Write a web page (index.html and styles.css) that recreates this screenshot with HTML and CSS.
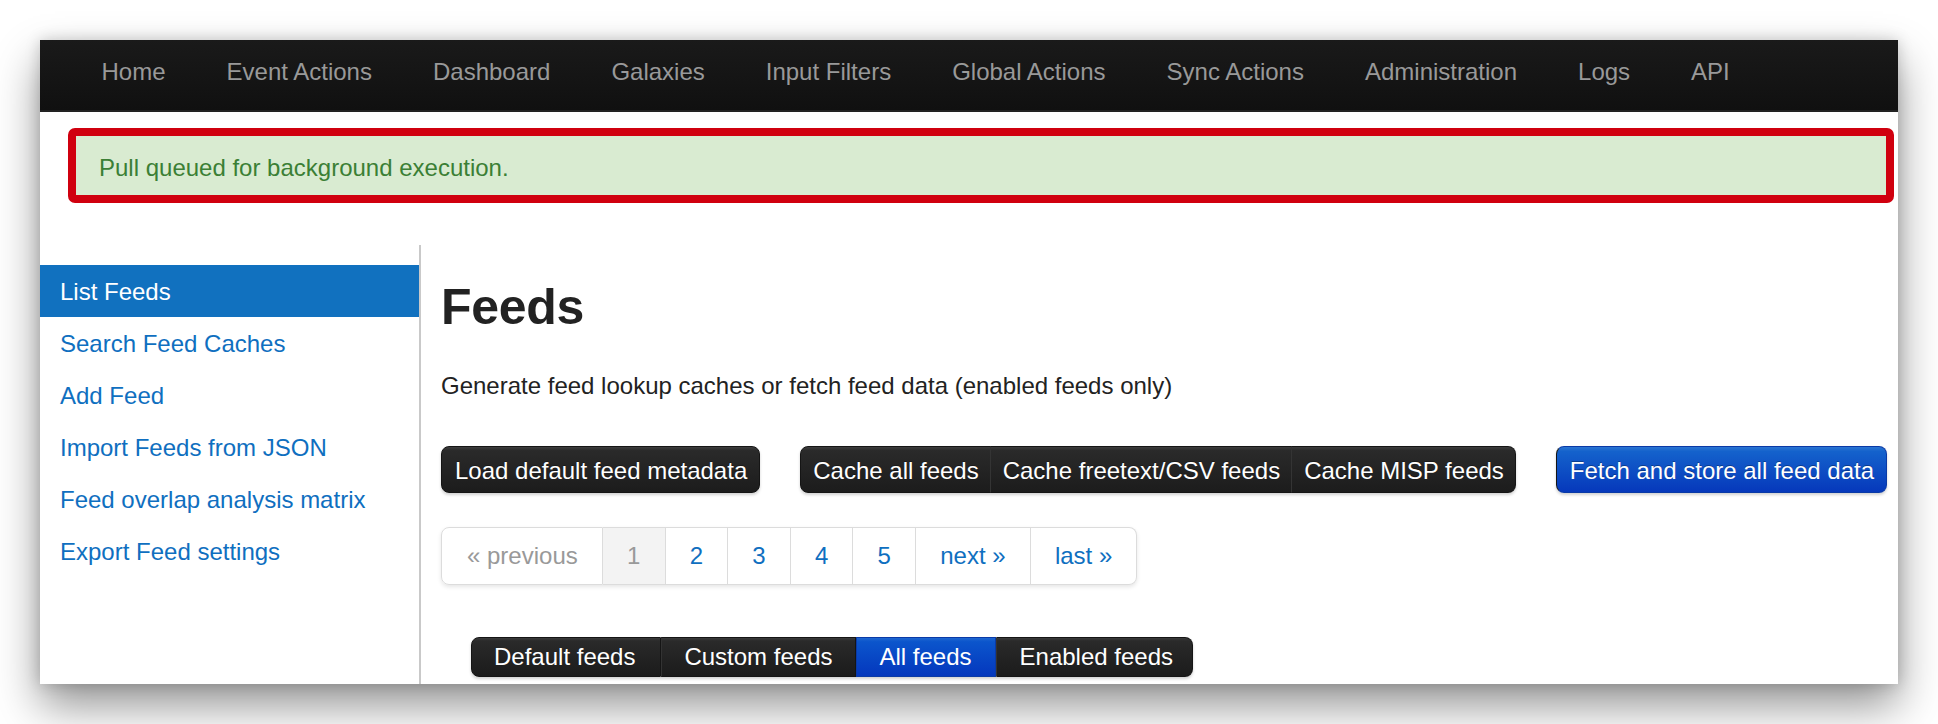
FILE: index.html
```html
<!DOCTYPE html>
<html>
<head>
<meta charset="utf-8">
<title>Feeds</title>
<link rel="stylesheet" href="styles.css">
</head>
<body>
<div class="window">
  <nav class="navbar">
    <ul class="nav">
      <li><a>Home</a></li>
      <li><a>Event Actions</a></li>
      <li><a>Dashboard</a></li>
      <li><a>Galaxies</a></li>
      <li><a>Input Filters</a></li>
      <li><a>Global Actions</a></li>
      <li><a>Sync Actions</a></li>
      <li><a>Administration</a></li>
      <li><a>Logs</a></li>
      <li><a>API</a></li>
    </ul>
  </nav>
  <div class="alert">Pull queued for background execution.</div>
  <div class="layout">
    <aside class="sidebar">
      <ul class="side-nav">
        <li class="active"><a>List Feeds</a></li>
        <li><a>Search Feed Caches</a></li>
        <li><a>Add Feed</a></li>
        <li><a>Import Feeds from JSON</a></li>
        <li><a>Feed overlap analysis matrix</a></li>
        <li><a>Export Feed settings</a></li>
      </ul>
    </aside>
    <main class="main">
      <h2 class="title">Feeds</h2>
      <p class="lead">Generate feed lookup caches or fetch feed data (enabled feeds only)</p>
      <div class="toolbar">
        <div class="btn-group">
          <a class="btn">Load default feed metadata</a>
        </div>
        <div class="btn-group">
          <a class="btn">Cache all feeds</a>
          <a class="btn">Cache freetext/CSV feeds</a>
          <a class="btn">Cache MISP feeds</a>
        </div>
        <div class="btn-group">
          <a class="btn btn-primary">Fetch and store all feed data</a>
        </div>
      </div>
      <ul class="pagination">
        <li class="disabled"><span>« previous</span></li>
        <li class="current"><span>1</span></li>
        <li><a>2</a></li>
        <li><a>3</a></li>
        <li><a>4</a></li>
        <li><a>5</a></li>
        <li><a>next »</a></li>
        <li><a>last »</a></li>
      </ul>
      <div class="filter-group">
        <a class="fbtn f-default">Default feeds</a>
        <a class="fbtn f-custom">Custom feeds</a>
        <a class="fbtn f-all active">All feeds</a>
        <a class="fbtn f-enabled">Enabled feeds</a>
      </div>
    </main>
  </div>
</div>
</body>
</html>
```
FILE: styles.css
```css
* { box-sizing: border-box; }
html, body { margin: 0; padding: 0; }
body {
  background: #ffffff;
  font-family: "Liberation Sans", Arial, Helvetica, sans-serif;
  font-size: 24px;
  color: #222;
  padding: 40px;
  width: 1938px;
  height: 724px;
  overflow: hidden;
}
.window {
  width: 1858px;
  height: 644px;
  background: #fff;
  overflow: hidden;
  box-shadow: 0 22px 42px rgba(0,0,0,0.42), 0 0 14px rgba(0,0,0,0.18);
}
.navbar {
  height: 72px;
  background: linear-gradient(#1a1a1a, #101010);
  border-bottom: 2px solid #222;
  padding-left: 31px;
}
.nav {
  list-style: none;
  margin: 0;
  padding: 0;
  display: flex;
}
.nav a {
  display: block;
  padding: 0 30.5px 6px;
  line-height: 64px;
  color: #999;
  font-size: 24px;
}
.alert {
  margin: 16px 4px 0 28px;
  height: 75px;
  border: 8px solid #d0000f;
  border-radius: 7px;
  background: #d9ebd1;
  color: #3b7f35;
  padding: 6px 23px 0;
  line-height: 51px;
  font-size: 24px;
}
.layout {
  display: flex;
  margin-top: 42px;
}
.sidebar {
  width: 381px;
  flex: none;
  border-right: 2px solid #c9c9c9;
  padding-top: 20px;
  min-height: 460px;
}
.side-nav {
  list-style: none;
  margin: 0;
  padding: 0;
}
.side-nav a {
  display: block;
  height: 52px;
  line-height: 52px;
  padding: 1px 0 0 20px;
  color: #0f6fc0;
  font-size: 24px;
}
.side-nav .active a {
  background: #1171bf;
  color: #fff;
}
.main {
  flex: 1;
  padding-left: 20px;
}
.title {
  margin: 32px 0 0;
  font-size: 50px;
  line-height: 60px;
  font-weight: bold;
  color: #222;
  letter-spacing: -0.3px;
}
.lead {
  margin: 31px 0 0;
  line-height: 36px;
  font-size: 24px;
  color: #222;
}
.toolbar {
  display: flex;
  gap: 40px;
  margin-top: 42px;
}
.btn-group {
  display: flex;
  border-radius: 8px;
  box-shadow: 0 2px 3px rgba(0,0,0,0.18);
}
.btn {
  display: block;
  height: 47px;
  padding: 2px 11px 0 12px;
  line-height: 43px;
  color: #fff;
  font-size: 24px;
  white-space: nowrap;
  background: linear-gradient(#3d3d3d 0, #2a2a2a 8%, #1c1c1c 100%);
  border: 1px solid #151515;
  border-left-color: #343434;
  text-shadow: 0 -1px 0 rgba(0,0,0,0.3);
}
.btn:first-child {
  border-radius: 8px 0 0 8px;
  border-left-color: #151515;
}
.btn:last-child { border-radius: 0 8px 8px 0; }
.btn:only-child { border-radius: 8px; padding: 2px 12px 0 13px; }
.btn-group .btn + .btn { margin-left: -1px; }
.btn-primary {
  background: linear-gradient(#2a74d2 0, #1462cc 10%, #0638bb 100%);
  border-color: #0a3aa6;
  border-left-color: #0a3aa6;
}
.pagination {
  list-style: none;
  margin: 34px 0 0;
  padding: 0;
  display: inline-flex;
  border-radius: 8px;
  box-shadow: 0 2px 4px rgba(0,0,0,0.1);
}
.pagination li a,
.pagination li span {
  display: block;
  height: 58px;
  line-height: 56px;
  padding: 0 24.15px;
  border: 1px solid #dcdcdc;
  border-left-width: 0;
  color: #0f6fc0;
  font-size: 24px;
  background: #fff;
  white-space: nowrap;
}
.pagination li:first-child span {
  border-left-width: 1px;
  border-radius: 8px 0 0 8px;
  padding-left: 25px;
}
.pagination li:last-child a {
  border-radius: 0 8px 8px 0;
}
.pagination .disabled span { color: #999; }
.pagination .current span {
  background: #f3f3f3;
  color: #999;
}
.filter-group {
  display: flex;
  width: max-content;
  margin: 52px 0 0 30px;
  border-radius: 8px;
  box-shadow: 0 2px 3px rgba(0,0,0,0.18);
}
.fbtn {
  display: block;
  height: 40px;
  line-height: 38px;
  color: #fff;
  font-size: 24px;
  white-space: nowrap;
  background: linear-gradient(#3a3a3a 0, #2a2a2a 8%, #1b1b1b 100%);
  border: 1px solid #151515;
  border-left-color: #333;
}
.f-default {
  border-radius: 8px 0 0 8px;
  border-left-color: #151515;
  padding: 0 25px 0 22px;
}
.f-custom { padding: 0 22px; }
.f-all { padding: 0 23px; }
.f-enabled { border-radius: 0 8px 8px 0; padding: 0 19px 0 23px; }
.fbtn.active {
  background: linear-gradient(#1e66d0 0, #0b55cc 10%, #0437bd 100%);
  border-color: #0a3aa6;
}
```
